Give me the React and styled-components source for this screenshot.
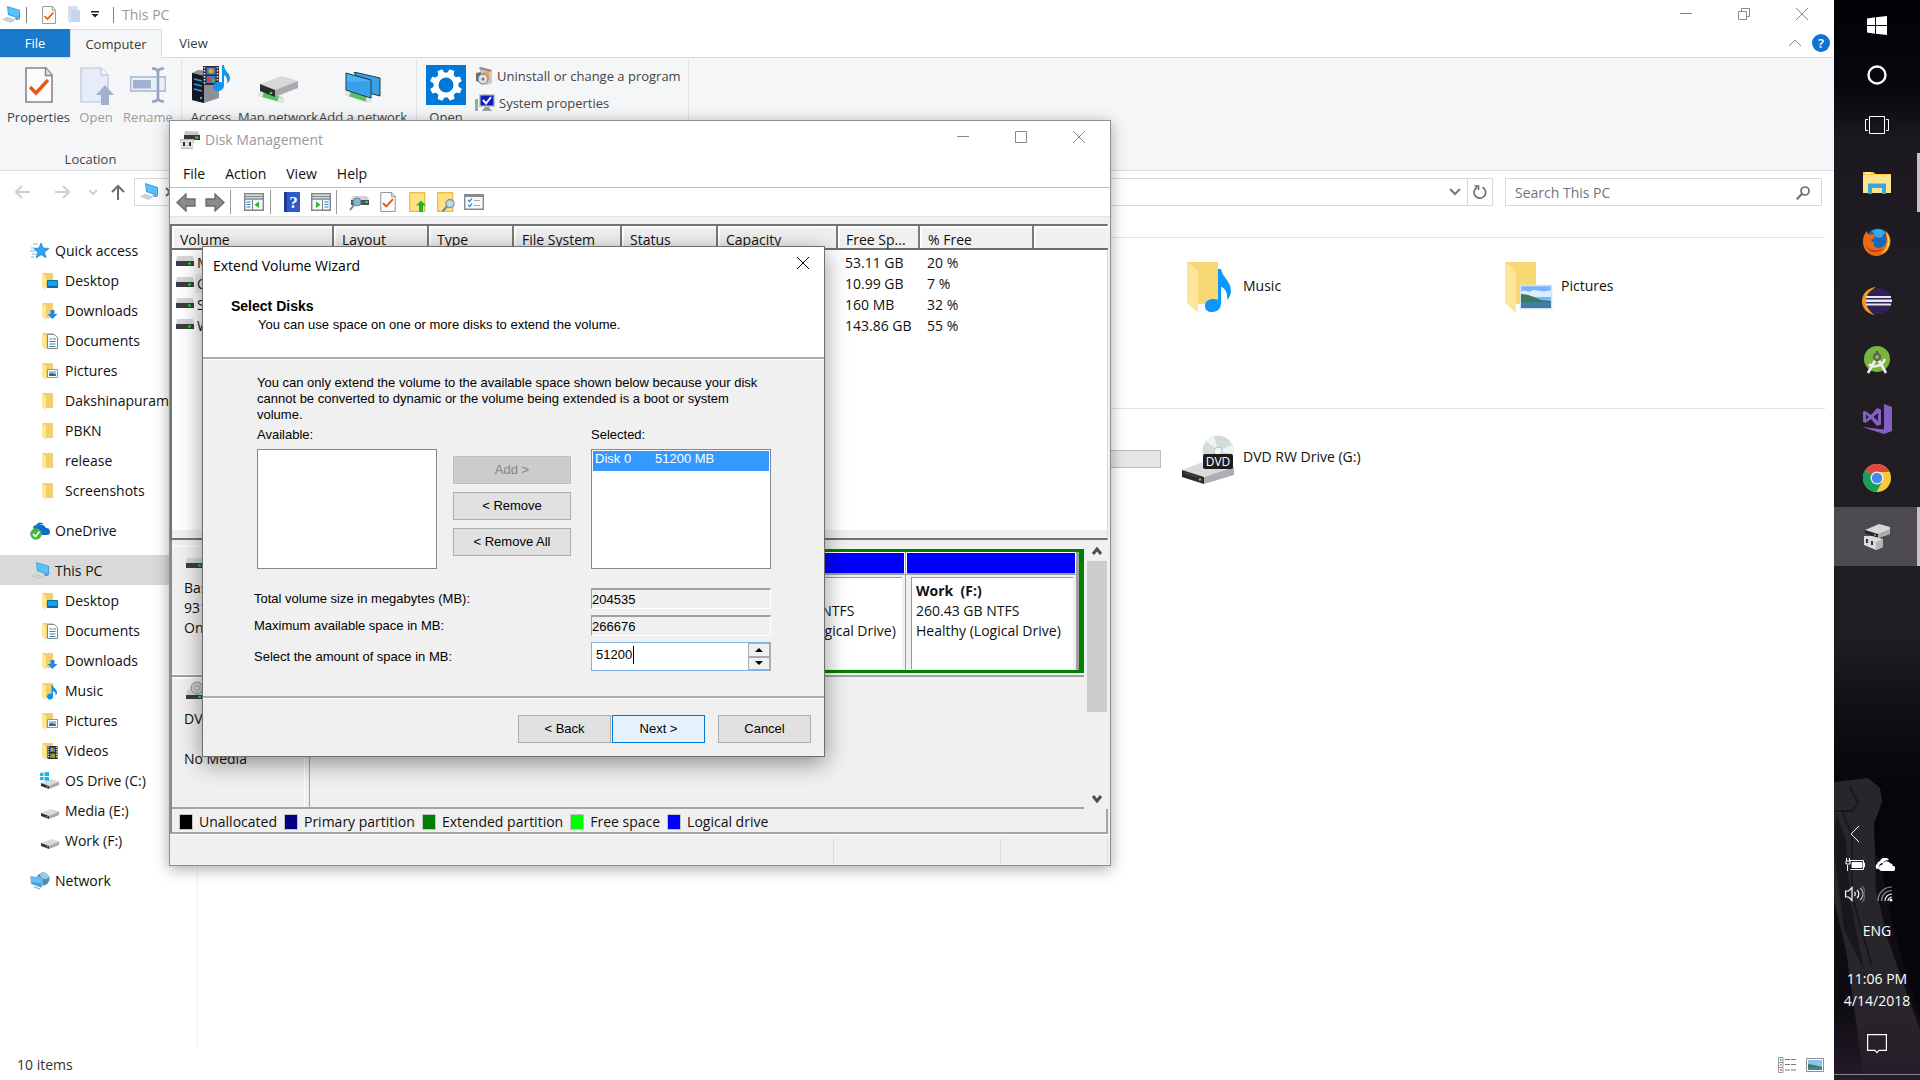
import { useState } from "react";
import styled, { createGlobalStyle, css } from "styled-components";

const ui = `"Open Sans", "Noto Sans", sans-serif`;
const dialog = `"Liberation Sans", Arial, sans-serif`;

/* ---------- icons ---------- */

const PcIcon = () => (
  <svg width="20" height="18" viewBox="0 0 20 18">
    <path d="M6 0 19 4v9L7 9z" fill="#3a9fe0" />
    <path d="M7 1.200 18 4.600v7L8 8.200z" fill="#5cc0fb" />
    <path d="M19 4v9l-3 1-3-2 6 1z" fill="#33668a" />
    <path d="M1 13 6 10.500l9 3-5 3.500z" fill="#d3dbe2" />
    <path d="m2 13.500 8 3M5 12l8 3" stroke="#a9b6c1" strokeWidth=".7" />
  </svg>
);

const DocCheckIcon = ({ w = 14, h = 18 }) => (
  <svg width={w} height={h} viewBox="0 0 28 36">
    <path d="M1 1h20l6 7v27H1z" fill="#fcfcfc" stroke="#858585" strokeWidth="1.600" />
    <path d="M20.500 1v7.500H27" fill="#e3e3e3" stroke="#858585" strokeWidth="1.400" />
    <path d="m5 20 6 6 12-13" fill="none" stroke="#f0520f" strokeWidth="3.400" />
  </svg>
);

const OpenIcon = () => (
  <svg width="36" height="38" viewBox="0 0 36 38">
    <path d="M3 1h20l7 7v27H3z" fill="#e6edf8" stroke="#b9c6de" strokeWidth="1.200" />
    <path d="M23 1v7h7" fill="#f5f8fd" stroke="#a9b8d3" />
    <path d="m27 18 9 10h-5v10h-8V28h-5z" fill="#a2b1ce" />
  </svg>
);

const RenameIcon = () => (
  <svg width="36" height="36" viewBox="0 0 36 36">
    <path d="M.7 10h34.600v14H.7z" fill="#eaf0f9" stroke="#a6b5d0" strokeWidth="1.300" />
    <path d="M3 13h18v8.500H3z" fill="#a2b1ce" />
    <path d="M22 1.500c4 0 6 1 6 4v25c0 3-2 4-6 4M34 1.500c-4 0-6 1-6 4v25c0 3 2 4 6 4" fill="none" stroke="#93a4c4" strokeWidth="2.600" />
  </svg>
);

const MediaIcon = () => (
  <svg width="40" height="38" viewBox="0 0 40 38">
    <path d="m1 8 6-3 21 1v27l-15 5-12-3z" fill="#8d9096" />
    <path d="m1 8 12 3v27L1 35z" fill="#15181d" />
    <path d="m3 14 8 2M3 19l8 2M3 24l8 2" stroke="#2b9ff2" strokeWidth="1.500" />
    <circle cx="10" cy="33" r="1.200" fill="#36b6ff" />
    <path d="M12 1h16v19H12z" fill="#2b2b2b" />
    <path d="M13.500 2v17M26.500 2v17" stroke="#e8e8e8" strokeWidth="1.600" strokeDasharray="1.500 1.500" />
    <path d="M15.500 2.500h9v7h-9zM15.500 11h9v7h-9z" fill="#3e7bd0" />
    <circle cx="20" cy="6" r="2.500" fill="#e7a51c" />
    <path d="M16 13h4v4h-4z" fill="#d8412b" />
    <path d="M21 14h3v3h-3z" fill="#5cad39" />
    <path d="M31 0h2c0 6 6 8 6 13 0 3-2 5-3 5 1-4-1-7-3-8v10c0 4-3 6-6 6s-5-2-5-4c0-3 3-5 6-5 1 0 2 0 3 .5z" fill="#1693ea" />
  </svg>
);

const NetDriveIcon = () => (
  <svg width="40" height="28" viewBox="0 0 40 28">
    <path d="m3 19 21 6" stroke="#57bf66" strokeWidth="5" />
    <path d="m0 18.500 5 1.500m15 4.500 6 1.500" stroke="#dfe6e0" strokeWidth="5" />
    <path d="M2 9 24 1l16 5-23 9z" fill="#d7d8da" />
    <path d="m17 15 23-9v7l-23 9z" fill="#a9abae" />
    <path d="m2 9 15 6v7L2 16z" fill="#2b2c2e" />
    <circle cx="13" cy="18" r="1.300" fill="#4be05c" />
  </svg>
);

const NetPlaceIcon = () => (
  <svg width="36" height="31" viewBox="0 0 36 31">
    <path d="m9 0 26 6v18L20 20z" fill="#3aa0e6" stroke="#24394b" />
    <path d="m2 21 22 7" stroke="#57bf66" strokeWidth="5" />
    <path d="m0 20.500 5 1.500m16 5 6 1.500" stroke="#dfe6e0" strokeWidth="5" />
    <path d="m1 1 25 7v18L1 18z" fill="#4db3f4" stroke="#20303f" />
    <path d="m2 10 23-1v16L2 17z" fill="#37a0ea" />
  </svg>
);

const GearIcon = () => (
  <svg width="40" height="40" viewBox="0 0 40 40">
    <path d="M0 0h40v40H0z" fill="#0078d7" />
    <circle cx="20" cy="20" r="10" fill="none" stroke="#fff" strokeWidth="5" />
    <g fill="#fff">
      {[22, 67, 112, 157, 202, 247, 292, 337].map((a) => (
        <path key={a} d="M16.500 9 17.500 4h5l1 5z" transform={`rotate(${a} 20 20)`} />
      ))}
    </g>
  </svg>
);

const UninstallIcon = () => (
  <svg width="18" height="20" viewBox="0 0 18 20">
    <path d="m5 1 12 3v13l-5 2-7-3z" fill="#c9c9c9" />
    <path d="m5 1 12 3-2 2L4 3z" fill="#8d8d8d" />
    <path d="M8 6h6v8H8z" fill="#f0a34a" />
    <path d="m1 7 5-1v11l-5-2z" fill="#6c7177" />
    <circle cx="8" cy="13" r="5" fill="#dde1e4" stroke="#757a80" />
    <circle cx="8" cy="13" r="1.500" fill="#777" />
  </svg>
);

const SystemIcon = () => (
  <svg width="20" height="18" viewBox="0 0 20 18">
    <path d="M0 5h3v12H0z" fill="#a7a7a7" />
    <circle cx="1.500" cy="8" r="1" fill="#35d43b" />
    <path d="M4 0h16v13H4z" fill="#c8c8c8" />
    <path d="M5.500 1.500h13v10h-13z" fill="#0a1fc0" />
    <path d="m8 6 3 3.500L16 3" fill="none" stroke="#fff" strokeWidth="2" />
    <path d="M10 13h4l3 4H7z" fill="#9c9c9c" />
  </svg>
);

const StarIcon = () => (
  <svg width="20" height="18" viewBox="0 0 20 18">
    <path d="m11 1 2.200 5 5.800.4-4.500 3.700 1.600 5.600L11 12.700 6 16l1.700-5.600L4 6.600 9 6z" fill="#2ea3ee" stroke="#1c7cc0" strokeWidth=".7" />
    <path d="M3 2h5M1 6h4M0 9h5M2 12h4M1 15h3" stroke="#67bdf1" />
  </svg>
);

const OneDriveIcon = () => (
  <svg width="20" height="18" viewBox="0 0 20 18">
    <path d="M5 10a4 4 0 0 1 3-6 5 5 0 0 1 8 2 4 4 0 0 1 4 4c0 2-1 3-3 3H7z" fill="#0a6fc9" />
    <path d="M3 5a4 4 0 0 1 3-2 5 5 0 0 1 8-1c-3 0-5 1-6 3-2 0-3 1-4 3z" fill="#1379d2" />
    <circle cx="6" cy="12" r="5.800" fill="#46b63c" />
    <path d="m3 12 2.500 2.500L9.500 9.500" fill="none" stroke="#fff" strokeWidth="1.700" />
  </svg>
);

const NetworkIcon = () => (
  <svg width="20" height="18" viewBox="0 0 20 18">
    <circle cx="13" cy="7" r="6.500" fill="#4a8fb5" />
    <path d="M9 3c3 1 3 4 6 4s3-2 4-2c0-3-4-5-7-5z" fill="#9bcde2" />
    <path d="m0 4 12 2v10L1 12z" fill="#3d9fe2" stroke="#d0e5f3" strokeWidth=".6" />
    <path d="m1 5 10 2v4L1 10z" fill="#66c1f8" />
    <path d="m4 15 6 2" stroke="#8aa" strokeWidth="1.300" />
  </svg>
);

const NoteShape = () => (
  <path d="M9.500 3h1.200c.3 3 4.800 4.500 4.300 8-.3 1.500-1 2-1.500 2.500.6-2-1-4-2.500-4.500V15a3 3 0 1 1-1.500-3z" fill="#0c91e8" />
);

const overlays = {
  desktop: (
    <g>
      <path d="M5.500 8.500h10v7h-10z" fill="#17a0f2" stroke="#0871b4" />
      <path d="M6 14.500h9" stroke="#0b5f9b" />
    </g>
  ),
  downloads: <path d="M8.500 8h4v4h3L10.500 17l-5-5h3z" fill="#2f86d6" />,
  documents: (
    <g>
      <path d="M5.500 2.500h7l3 3v11h-10z" fill="#fff" stroke="#868686" />
      <path d="M7.500 7h2.500M11 7h3M7.500 9.500h6M7.500 12h6M7.500 14.500h6" stroke="#2e84bb" />
    </g>
  ),
  pictures: (
    <g>
      <path d="M5.500 7.500h10v8h-10z" fill="#fff" stroke="#959595" />
      <path d="M7 9h7v3H7z" fill="#8fc4ef" />
      <path d="m7 12 3-1 4 1.500V14H7z" fill="#2c6f72" />
    </g>
  ),
  music: <NoteShape />,
  videos: (
    <g>
      <path d="M5.500 4h10v13h-10z" fill="#2b2b2b" />
      <path d="M6.600 4.500v12M14.400 4.500v12" stroke="#e8e8e8" strokeWidth="1.100" strokeDasharray="1.200 1.200" />
      <path d="M8 5.500h5v4.500H8z" fill="#3f77cf" />
      <path d="M8 11.500h5V16H8z" fill="#6a8f3a" />
      <path d="M9 6h2v3H9zM10.500 12h2v3h-2z" fill="#e59b28" />
    </g>
  ),
};

const FolderIcon = ({ kind }) => (
  <svg width="17" height="18" viewBox="0 0 17 18">
    <path d="M0 1h11v14l1 1H4z" fill="#f2cf68" />
    <path d="m0 1 4 3v14l-4-3z" fill="#fde79b" />
    {overlays[kind]}
  </svg>
);

const BigFolderIcon = ({ kind }) => (
  <svg width="54" height="52" viewBox="0 0 54 52">
    <path d="M5 0h31v42H16z" fill="#f6d877" />
    <path d="m5 0 11 9v42L5 41z" fill="#fde699" />
    {kind === "music" ? (
      <path d="M36 7h3c1 8 10 12 10 22 0 4-2 7-4 9 1-7-2-12-6-13v16c0 6-4 9-9 9-4 0-7-2-7-6 0-5 4-7 8-7 2 0 4 0 5 1z" fill="#0b98f8" />
    ) : (
      <g>
        <path d="M20.500 23.500h31v23h-31z" fill="#79b4fb" stroke="#d8e2ec" strokeWidth="1.500" />
        <path d="M21 30c4-3 7 1 10-1 5-3 9 3 20-1v7H21z" fill="#dcedff" />
        <path d="M21 32c6 0 14 3 20 6l10 1v2H21z" fill="#3f7a57" />
        <path d="M21 40h30v6H21z" fill="#3f7fa6" />
      </g>
    )}
  </svg>
);

const DriveIcon = ({ system }) => (
  <svg width="20" height="18" viewBox="0 0 20 18">
    <path d="m1 11 10-4 8 2.500-10 4.500z" fill="#d9dadc" />
    <path d="m9 14 10-4.500V13l-10 4z" fill="#a7a8ab" />
    <path d="m1 11 8 3v3l-8-3z" fill="#303133" />
    <circle cx="7" cy="14.700" r=".8" fill="#44dd55" />
    {system && (
      <g fill="#1eb4ea">
        <path d="m0 1 3.500-.5V4H0zM4.500.3 9 0v4H4.500zM0 5h3.500v3.500L0 8zM4.500 5H9v4l-4.500-.4z" />
      </g>
    )}
  </svg>
);

const DvdDriveIcon = () => (
  <svg width="54" height="52" viewBox="0 0 54 52">
    <circle cx="36" cy="18" r="15.500" fill="#d3dcdb" />
    <path d="M36 18 24 8a15.500 15.500 0 0 1 8-5zM36 18l14-6a15.500 15.500 0 0 1 1 9z" fill="#eef4f2" />
    <circle cx="36" cy="18" r="4" fill="#f3f6f5" stroke="#b9c3c2" />
    <path d="m0 37 26-10 26 7-30 10z" fill="#d9dadd" />
    <path d="m22 44 30-10v8L22 51z" fill="#adaeb2" />
    <path d="m0 37 22 7v7L0 44z" fill="#2a2a2c" />
    <path d="m3 40 13 4" stroke="#555" />
    <circle cx="18" cy="46.500" r="1.300" fill="#41dd4a" />
    <rect x="21" y="21" width="30" height="15" rx="2" fill="#1d1d1f" />
    <text x="36" y="33" textAnchor="middle" fontFamily="Open Sans" fontSize="12" fill="#fff">DVD</text>
  </svg>
);

const MgmtIcon = ({ size = 20 }) => (
  <svg width={size} height={size} viewBox="0 0 20 20">
    <path d="m5 1 13 .5L20 6v4H4V6z" fill="#c5c7c9" />
    <path d="M4 5h16v5H4z" fill="#37393b" />
    <path d="M15 6.500h3.500v2H15z" fill="#2fcf3f" />
    <path d="M0 9h14v4h-1v6H1v-6H0z" fill="#b8babd" />
    <path d="M1 10h12v8H1z" fill="#dedfe0" />
    <path d="M3 12h2v4H3zM9 12h2v4H9z" fill="#333" />
  </svg>
);

const VolumeIcon = () => (
  <svg width="18" height="12" viewBox="0 0 18 12">
    <path d="M1 0h16l1 5H0z" fill="#d4d7da" />
    <path d="M0 5h18v5H0z" fill="#3b3d3f" />
    <path d="M12 6.500h3v2h-3z" fill="#2bd03c" />
  </svg>
);

const CdIcon = () => (
  <svg width="20" height="20" viewBox="0 0 20 20">
    <path d="M2 8h16l2 6H0z" fill="#d4d7da" />
    <circle cx="11" cy="7" r="6" fill="#c9cccf" stroke="#8f9396" />
    <circle cx="11" cy="7" r="2" fill="#f2f2f2" stroke="#999" />
    <path d="M0 14h20v4H0z" fill="#3b3d3f" />
    <path d="M12 15h3v2h-3z" fill="#2bd03c" />
  </svg>
);

const BigArrow = ({ flip }) => (
  <svg width="20" height="19" viewBox="0 0 20 19">
    <path d="M1 9.500 10 1v5h9v7h-9v5z" fill="#8b8b8b" stroke="#6a6a6a" strokeWidth="1.300" transform={flip ? "matrix(-1 0 0 1 20 0)" : undefined} />
  </svg>
);

const PaneIcon = ({ right }) => (
  <svg width="20" height="18" viewBox="0 0 20 18">
    <path d="M.7.700h18.600v16.600H.7z" fill="#f7f7f7" stroke="#80868d" strokeWidth="1.400" />
    <path d="M1 3.500h18M1 6h18" stroke="#80868d" strokeWidth="1.500" />
    <g transform={right ? "matrix(-1 0 0 1 20 0)" : undefined}>
      <path d="M2.500 9h4M2.500 11.500h4M2.500 14h4" stroke="#3b82c4" />
      <path d="M8.500 6.500V17" stroke="#80868d" />
      <path d="m15 8.500-4.500 3.300L15 15z" fill="#30b52c" />
    </g>
  </svg>
);

const HelpBookIcon = () => (
  <svg width="16" height="20" viewBox="0 0 16 20">
    <path d="M0 0h16v20H0z" fill="#3159c8" />
    <path d="M0 0h3v20H0z" fill="#1d3c99" />
    <text x="9.500" y="15.500" textAnchor="middle" fontFamily="Liberation Serif" fontWeight="700" fontSize="17" fill="#fff">?</text>
  </svg>
);

const RescanIcon = () => (
  <svg width="20" height="18" viewBox="0 0 20 18">
    <path d="m4 3 14 0 2 4H2z" fill="#cfd2d4" />
    <path d="M2 7h18v5H2z" fill="#4d5255" />
    <path d="M16 8h3v2h-3z" fill="#2bd03c" />
    <circle cx="8" cy="9" r="4" fill="#86b3cf" stroke="#6c8798" />
    <path d="m5 12-4 5" stroke="#76808a" strokeWidth="2" />
  </svg>
);

const FolderUpIcon = () => (
  <svg width="17" height="20" viewBox="0 0 17 20">
    <path d="M.7.700h15v18.600H.7z" fill="#fde184" stroke="#e7bd3c" strokeWidth="1.200" />
    <path d="m12 8.500 5 5h-3V20h-4v-6.500H7z" fill="#1fb91f" />
  </svg>
);

const FolderFindIcon = () => (
  <svg width="18" height="20" viewBox="0 0 18 20">
    <path d="M.7.700h15v18.600H.7z" fill="#fde184" stroke="#e7bd3c" strokeWidth="1.200" />
    <circle cx="13" cy="11.500" r="4" fill="#bcdcec" stroke="#7c93a2" strokeWidth="1.300" />
    <path d="m10 14.500-4.500 5" stroke="#7d858c" strokeWidth="2" />
  </svg>
);

const ChecklistIcon = () => (
  <svg width="20" height="16" viewBox="0 0 20 16">
    <path d="M.7.700h18.600v14.600H.7z" fill="#fafafa" stroke="#858a90" strokeWidth="1.400" />
    <path d="M1 2h18" stroke="#858a90" strokeWidth="2" />
    <path d="m4 6 1.500 1.500L8 4.500M4 11l1.500 1.500L8 9.500" fill="none" stroke="#3b8fdc" strokeWidth="1.300" />
    <path d="M10 6.500h6M10 11.500h6" stroke="#a9a9a9" />
  </svg>
);

const Line = ({ d, w = 18, h = 18, color = "#8a8a8a", sw = 1 }) => (
  <svg width={w} height={h} viewBox={`0 0 ${w} ${h}`}>
    <path d={d} fill="none" stroke={color} strokeWidth={sw} />
  </svg>
);

const MIN = "M0 5.500h12";
const MAX = "M.5.500h11v11H.5z";
const CLOSE = "M0 0l12 12M12 0 0 12";
const RESTORE = "M.5 3.500h8v8h-8zM3.500 3V.500h8v8H9";

/* ---------- data ---------- */

const tree = [
  {
    label: "Quick access",
    icon: <StarIcon />,
    items: [
      ["Desktop", <FolderIcon kind="desktop" />],
      ["Downloads", <FolderIcon kind="downloads" />],
      ["Documents", <FolderIcon kind="documents" />],
      ["Pictures", <FolderIcon kind="pictures" />],
      ["Dakshinapuram", <FolderIcon />],
      ["PBKN", <FolderIcon />],
      ["release", <FolderIcon />],
      ["Screenshots", <FolderIcon />],
    ],
  },
  { label: "OneDrive", icon: <OneDriveIcon />, items: [] },
  {
    label: "This PC",
    icon: <PcIcon />,
    active: true,
    items: [
      ["Desktop", <FolderIcon kind="desktop" />],
      ["Documents", <FolderIcon kind="documents" />],
      ["Downloads", <FolderIcon kind="downloads" />],
      ["Music", <FolderIcon kind="music" />],
      ["Pictures", <FolderIcon kind="pictures" />],
      ["Videos", <FolderIcon kind="videos" />],
      ["OS Drive (C:)", <DriveIcon system />],
      ["Media (E:)", <DriveIcon />],
      ["Work (F:)", <DriveIcon />],
    ],
  },
  { label: "Network", icon: <NetworkIcon />, items: [] },
];

const columns = [
  ["Volume", 161],
  ["Layout", 95],
  ["Type", 85],
  ["File System", 108],
  ["Status", 96],
  ["Capacity", 120],
  ["Free Sp...", 82],
  ["% Free", 114],
  ["", 75],
];

const volumes = [
  ["Media (E:)", "53.11 GB", "20 %"],
  ["OS Drive (C:)", "10.99 GB", "7 %"],
  ["System", "160 MB", "32 %"],
  ["Work (F:)", "143.86 GB", "55 %"],
];

const legend = [
  ["Unallocated", "#000000"],
  ["Primary partition", "#000080"],
  ["Extended partition", "#008000"],
  ["Free space", "#00ff00"],
  ["Logical drive", "#0000ff"],
];

/* ---------- explorer ---------- */

const Explorer = () => (
  <ExplorerView>
    <TitleBar>
      <QuickBar>
        <PcIcon />
        <Divider />
        <IconButton $w={34} aria-label="Properties"><DocCheckIcon /></IconButton>
        <IconButton $w={16} aria-label="New folder">
          <svg width="12" height="18" viewBox="0 0 12 18">
            <path d="M0 0h10v4l2 1v11H3v2l-3-3z" fill="#d5e0f0" />
            <path d="M3 4h9v12H3z" fill="#c6d5ea" />
          </svg>
        </IconButton>
        <IconButton $w={26} aria-label="Customize">
          <svg width="8" height="7" viewBox="0 0 8 7">
            <path d="M0 0h8v1.400H0zM.5 3h7L4 6.500z" fill="#222" />
          </svg>
        </IconButton>
        <Divider />
        <span>This PC</span>
      </QuickBar>
      <WindowButtons>
        <button aria-label="Minimize"><Line d={MIN} w={12} h={12} /></button>
        <button aria-label="Restore"><Line d={RESTORE} w={12} h={12} /></button>
        <button aria-label="Close"><Line d={CLOSE} w={12} h={12} /></button>
      </WindowButtons>
    </TitleBar>

    <Tabs>
      <FileTab>File</FileTab>
      <Tab $active>Computer</Tab>
      <Tab>View</Tab>
      <TabTools>
        <IconButton $w={20} aria-label="Collapse ribbon"><Line d="M0 7l6-6 6 6" w={12} h={8} /></IconButton>
        <HelpButton aria-label="Help">?</HelpButton>
      </TabTools>
    </Tabs>

    <Ribbon>
      <RibbonGroup $w={181}>
        <RibbonButtons>
          <RibbonButton $w={77}><DocCheckIcon w={28} h={36} />Properties</RibbonButton>
          <RibbonButton $w={38} $tight disabled><OpenIcon />Open</RibbonButton>
          <RibbonButton $w={66} disabled><RenameIcon />Rename</RibbonButton>
        </RibbonButtons>
        <GroupName>Location</GroupName>
      </RibbonGroup>
      <RibbonGroup $w={234}>
        <RibbonButtons>
          <RibbonButton $w={58}><MediaIcon />Access</RibbonButton>
          <RibbonButton $w={76}><NetDriveIcon />Map network</RibbonButton>
          <RibbonButton $w={94}><NetPlaceIcon />Add a network</RibbonButton>
        </RibbonButtons>
      </RibbonGroup>
      <RibbonGroup $w={271}>
        <RibbonButtons>
          <RibbonButton $w={58} $tight><GearIcon />Open</RibbonButton>
          <SmallButtons>
            <button><UninstallIcon />Uninstall or change a program</button>
            <button><SystemIcon />System properties</button>
          </SmallButtons>
        </RibbonButtons>
      </RibbonGroup>
    </Ribbon>

    <AddressRow>
      <NavButtons>
        <IconButton $w={40} aria-label="Back"><Line d="M15 8H1M7 2 1 8l6 6" w={16} h={16} color="#cfcfcf" sw={2} /></IconButton>
        <IconButton $w={40} aria-label="Forward"><Line d="M0 8h14M8 2l6 6-6 6" w={16} h={16} color="#cfcfcf" sw={2} /></IconButton>
        <IconButton $w={20} aria-label="Recent"><Line d="M0 1l4 4 4-4" w={8} h={6} color="#cfcfcf" sw={2} /></IconButton>
        <IconButton $w={30} aria-label="Up"><Line d="M7 16V2M1 8l6-6 6 6" w={14} h={16} color="#6b6b6b" sw={2} /></IconButton>
      </NavButtons>
      <AddressBox>
        <Crumb>
          <PcIcon />
          <Line d="M1 1l4 4-4 4" w={6} h={10} color="#6b6b6b" sw={2} />
        </Crumb>
        <IconButton $w={24} aria-label="Previous locations"><Line d="M1 1l5 5 5-5" w={12} h={8} color="#777" sw={2} /></IconButton>
        <RefreshButton aria-label="Refresh">
          <svg width="14" height="16" viewBox="0 0 14 16" fill="none" stroke="#707070" strokeWidth="1.700">
            <path d="M9.500 3.200A5.800 5.800 0 1 1 4 3.300M1.500 2h4v4" />
          </svg>
        </RefreshButton>
      </AddressBox>
      <SearchBox>
        <input aria-label="Search This PC" placeholder="Search This PC" />
        <svg width="14" height="14" viewBox="0 0 14 14" fill="none" stroke="#6b6b6b">
          <circle cx="9" cy="5" r="4" strokeWidth="1.700" />
          <path d="M6 8 .7 13.300" strokeWidth="2" />
        </svg>
      </SearchBox>
    </AddressRow>

    <ExplorerBody>
      <NavPane>
        {tree.map((group) => (
          <ul key={group.label}>
            <li><NavLink href="#" $active={group.active}><i>{group.icon}</i>{group.label}</NavLink></li>
            {group.items.map(([label, icon]) => (
              <li key={label}><NavLink href="#" $child><i>{icon}</i>{label}</NavLink></li>
            ))}
          </ul>
        ))}
      </NavPane>
      <Content>
        <Tiles>
          <Tile href="#" $col={4}><BigFolderIcon kind="music" /><span>Music</span></Tile>
          <Tile href="#" $col={5}><BigFolderIcon kind="pictures" /><span>Pictures</span></Tile>
        </Tiles>
        <Tiles>
          <Tile href="#" $col={3} aria-label="Work (F:)"><DriveSlot /><UsageBar /></Tile>
          <Tile href="#" $col={4}><DvdDriveIcon /><span>DVD RW Drive (G:)</span></Tile>
        </Tiles>
      </Content>
    </ExplorerBody>

    <StatusBar>
      <span>10 items</span>
      <ViewButtons>
        <button aria-label="Details">
          <svg width="18" height="16" viewBox="0 0 18 16">
            <path d="M.5.500h4.500v15H.5zM.5 5.500H5M.5 10.500H5" fill="#fff" stroke="#999" />
            <path d="M2 2.200h1.600v1.600H2z" fill="#2b82b8" />
            <path d="M2 7.200h1.600v1.600H2z" fill="#b86d2b" />
            <path d="M2 12.200h1.600v1.600H2z" fill="#d22" />
            <path d="M7 2.500h5m1 0h5M7 7.500h5m1 0h5M7 13h5m1 0h5" stroke="#777" />
          </svg>
        </button>
        <button aria-label="Large icons">
          <svg width="18" height="14" viewBox="0 0 18 14">
            <path d="M.5.500h17v13H.5z" fill="#fff" stroke="#8f8f8f" />
            <path d="M2 2h14v10H2z" fill="#8cc0f5" />
            <path d="m2 6 6 1 8 2v1H2z" fill="#3d7a5d" />
            <path d="M2 9.500h14V12H2z" fill="#467fa8" />
          </svg>
        </button>
      </ViewButtons>
    </StatusBar>
  </ExplorerView>
);

/* ---------- disk management ---------- */

const DiskManagement = () => (
  <DiskWindow>
    <DiskTitle>
      <MgmtIcon />
      <span>Disk Management</span>
      <WindowButtons>
        <button aria-label="Minimize"><Line d={MIN} w={12} h={12} /></button>
        <button aria-label="Maximize"><Line d={MAX} w={12} h={12} /></button>
        <button aria-label="Close"><Line d={CLOSE} w={12} h={12} /></button>
      </WindowButtons>
    </DiskTitle>
    <MenuBar>
      <button>File</button>
      <button>Action</button>
      <button>View</button>
      <button>Help</button>
    </MenuBar>
    <Toolbar>
      <IconButton $w={28} aria-label="Back"><BigArrow /></IconButton>
      <IconButton $w={30} aria-label="Forward"><BigArrow flip /></IconButton>
      <ToolDivider />
      <IconButton $w={32} aria-label="Console tree"><PaneIcon /></IconButton>
      <ToolDivider />
      <IconButton $w={28} aria-label="Help"><HelpBookIcon /></IconButton>
      <IconButton $w={30} aria-label="Action pane"><PaneIcon right /></IconButton>
      <ToolDivider />
      <IconButton $w={30} aria-label="Rescan"><RescanIcon /></IconButton>
      <IconButton $w={28} aria-label="Properties"><DocCheckIcon w={16} h={20} /></IconButton>
      <IconButton $w={30} aria-label="Up"><FolderUpIcon /></IconButton>
      <IconButton $w={28} aria-label="Find"><FolderFindIcon /></IconButton>
      <IconButton $w={28} aria-label="Settings"><ChecklistIcon /></IconButton>
    </Toolbar>

    <Panes>
      <VolumePane>
        <VolumeTable>
          <colgroup>
            {columns.map(([name, width]) => <col key={name} style={{ width }} />)}
          </colgroup>
          <thead>
            <tr>{columns.map(([name]) => <th key={name}>{name}</th>)}</tr>
          </thead>
          <tbody>
            {volumes.map(([name, free, percent], i) => (
              <tr key={name}>
                <VolumeName $selected={i === 1}><VolumeIcon /><span>{name}</span></VolumeName>
                <td /><td /><td /><td /><td />
                <td>{free}</td>
                <td>{percent}</td>
                <td />
              </tr>
            ))}
          </tbody>
        </VolumeTable>
      </VolumePane>
      <GraphPane>
        <Disks>
          <DiskRow>
            <DiskLabel>
              <VolumeIcon />
              <p>Basic</p>
              <p>931.39 GB</p>
              <p>Online</p>
            </DiskLabel>
            <PartitionStrip>
              <Extended>
                <Partition $w={165}>
                  <div>
                    <b>Media&nbsp; (E:)</b>
                    <p>265.53 GB NTFS</p>
                    <p>Healthy (Logical Drive)</p>
                  </div>
                </Partition>
                <Partition $w={173}>
                  <div>
                    <b>Work&nbsp; (F:)</b>
                    <p>260.43 GB NTFS</p>
                    <p>Healthy (Logical Drive)</p>
                  </div>
                </Partition>
              </Extended>
            </PartitionStrip>
          </DiskRow>
          <DiskRow>
            <DiskLabel>
              <CdIcon />
              <p>DVD (G:)</p>
              <p>&nbsp;</p>
              <p>No Media</p>
            </DiskLabel>
          </DiskRow>
        </Disks>
        <ScrollBar>
          <button aria-label="Scroll up"><Line d="M1 7l4-5 4 5" w={10} h={8} color="#505050" sw={3} /></button>
          <ScrollThumb />
          <Spacer />
          <button aria-label="Scroll down"><Line d="M1 1l4 5 4-5" w={10} h={8} color="#505050" sw={3} /></button>
        </ScrollBar>
      </GraphPane>
      <Legend>
        {legend.map(([name, color]) => (
          <li key={name}><Swatch $color={color} />{name}</li>
        ))}
      </Legend>
    </Panes>
    <DiskStatus><span /><span /><span /></DiskStatus>
  </DiskWindow>
);

/* ---------- wizard ---------- */

const ExtendWizard = () => {
  const [amount, setAmount] = useState("51200");

  return (
    <WizardView>
      <WizardHeader>
        <WizardTitle>
          Extend Volume Wizard
          <button aria-label="Close"><Line d={CLOSE} w={12} h={12} color="#000" /></button>
        </WizardTitle>
        <h2>Select Disks</h2>
        <p>You can use space on one or more disks to extend the volume.</p>
      </WizardHeader>

      <WizardBody>
        <p>
          You can only extend the volume to the available space shown below because your disk
          cannot be converted to dynamic or the volume being extended is a boot or system volume.
        </p>
        <DiskPicker>
          <div>
            <span id="available">Available:</span>
            <ListBox role="listbox" aria-labelledby="available" />
          </div>
          <PickerButtons>
            <DialogButton disabled>Add &gt;</DialogButton>
            <DialogButton>&lt; Remove</DialogButton>
            <DialogButton>&lt; Remove All</DialogButton>
          </PickerButtons>
          <div>
            <span id="selected">Selected:</span>
            <ListBox role="listbox" aria-labelledby="selected">
              <li role="option" aria-selected="true"><span>Disk 0</span><span>51200 MB</span></li>
            </ListBox>
          </div>
        </DiskPicker>
        <Sizes>
          <label htmlFor="total">Total volume size in megabytes (MB):</label>
          <ReadOnlyField id="total" readOnly value="204535" />
          <label htmlFor="maximum">Maximum available space in MB:</label>
          <ReadOnlyField id="maximum" readOnly value="266676" />
          <label htmlFor="amount">Select the amount of space in MB:</label>
          <Spinner>
            <input id="amount" value={amount} onChange={(e) => setAmount(e.target.value)} />
            <Caret />
            <SpinButtons>
              <button aria-label="Increase" onClick={() => setAmount(String(+amount + 1))}>
                <svg width="8" height="4" viewBox="0 0 8 4"><path d="M0 4 4 0l4 4z" /></svg>
              </button>
              <button aria-label="Decrease" onClick={() => setAmount(String(+amount - 1))}>
                <svg width="8" height="4" viewBox="0 0 8 4"><path d="m0 0 4 4 4-4z" /></svg>
              </button>
            </SpinButtons>
          </Spinner>
        </Sizes>
      </WizardBody>

      <WizardFooter>
        <StepButtons>
          <DialogButton>&lt; Back</DialogButton>
          <DialogButton $primary>Next &gt;</DialogButton>
        </StepButtons>
        <DialogButton>Cancel</DialogButton>
      </WizardFooter>
    </WizardView>
  );
};

/* ---------- taskbar ---------- */

const Taskbar = () => (
  <TaskbarView>
    <Wallpaper viewBox="0 0 86 1080" preserveAspectRatio="none" aria-hidden="true">
      <defs>
        <linearGradient id="night" x2="0" y2="1">
          <stop offset="0" stopColor="#010106" />
          <stop offset=".08" stopColor="#07070d" />
          <stop offset=".13" stopColor="#1b1820" />
          <stop offset=".3" stopColor="#211e23" />
          <stop offset=".6" stopColor="#1f1c22" />
          <stop offset=".74" stopColor="#141218" />
          <stop offset="1" stopColor="#0a070e" />
        </linearGradient>
        <linearGradient id="sky" gradientUnits="userSpaceOnUse" x1="0" y1="640" x2="0" y2="800">
          <stop offset="0" stopColor="#05050b" stopOpacity="0" />
          <stop offset="1" stopColor="#05050b" />
        </linearGradient>
        <linearGradient id="plum" x2="0" y2="1">
          <stop offset="0" stopColor="#241c28" stopOpacity="0" />
          <stop offset="1" stopColor="#271c29" />
        </linearGradient>
      </defs>
      <path d="M0 0h86v1080H0z" fill="url(#night)" />
      <path d="M0 640h86v380L60 930 46 860 0 800z" fill="url(#sky)" />
      <path d="M0 782 34 778l12 10 2 14-8 22 2 66 12 50 32 90v50H30L12 950 0 900z" fill="#28262a" />
      <path d="M2 812 12 840l4 60 14 70-20-40L0 850z" fill="#19171c" />
      <path d="M0 811h18l6-8-8-16M8 811l10 25v60l20 70" fill="none" stroke="#1a181c" strokeWidth="2" />
      <path d="M0 1000h86v80H0z" fill="url(#plum)" />
      <path d="M0 1074.500h86" stroke="#8a858c" />
    </Wallpaper>
    <SystemButton aria-label="Start">
      <svg width="20" height="19" viewBox="0 0 20 19" fill="#fff">
        <path d="m0 2.500 8-1.200V9H0zM9 1.200 20 0v9H9zM0 10h8v7.700L0 16.500zM9 10h11v9L9 17.800z" />
      </svg>
    </SystemButton>
    <SystemButton aria-label="Cortana">
      <svg width="20" height="20" viewBox="0 0 20 20"><circle cx="10" cy="10" r="8.500" fill="none" stroke="#fff" strokeWidth="2.400" /></svg>
    </SystemButton>
    <SystemButton aria-label="Task view">
      <svg width="24" height="18" viewBox="0 0 24 18" fill="none" stroke="#fff">
        <path d="M4.500.500h15v17h-15zM3 3.500H.5v11H3M21 3.500h2.500v11H21" />
      </svg>
    </SystemButton>
    <Apps>
      <AppButton $open aria-label="File Explorer">
        <svg width="28" height="24" viewBox="0 0 28 24">
          <path d="M0 1h10l3 2h15v19H0z" fill="#f8c644" />
          <path d="M0 4h28v18H0z" fill="#ffe48f" />
          <path d="M2 1.500h6v1.300H2z" fill="#fff" />
          <path d="M5 12.500h18V23h-4v-6H9v6H5z" fill="#35a9e0" />
        </svg>
      </AppButton>
      <AppButton aria-label="Firefox">
        <svg width="28" height="28" viewBox="0 0 28 28">
          <circle cx="15" cy="13" r="12.500" fill="#1569b5" />
          <path d="M9 3c5-3 12-2 14 3-3-1-4 1-3 3l-6 1z" fill="#35a9e5" />
          <path d="M23 3c8 7 5 24-9 25C6 28 0 22 0 14 0 8 2 5 4 3c0 2 1 3 2 4 2-1 4-1 6 0 1 1 0 2-1 3l-3 2c0 1 1 2 3 2-1 3 0 6 4 6 6 0 10-5 8-12z" fill="#ea6a1b" />
          <path d="M23 4c6 6 5 18-5 22 7-6 8-14 5-22z" fill="#fcd93c" />
          <path d="M3 17c3 6 11 7 17 3-2 5-14 7-17-3z" fill="#c9331a" />
        </svg>
      </AppButton>
      <AppButton aria-label="Eclipse">
        <svg width="30" height="28" viewBox="0 0 30 28">
          <path d="M14 0C-4 2-5 25 13 28 2 22 3 6 14 0z" fill="#f7941e" />
          <circle cx="17" cy="14" r="13" fill="#2c2255" />
          <path d="M4 12.500h26v2.500H4zM4 9h25v2H4zM4 16.500h25v2H4z" fill="#e7e5ee" />
        </svg>
      </AppButton>
      <AppButton aria-label="Android Studio">
        <svg width="26" height="28" viewBox="0 0 26 28">
          <circle cx="13" cy="13" r="13" fill="#79b43c" />
          <path d="M13 11 4 27M13 11l9 16" stroke="#ededed" strokeWidth="2.600" />
          <path d="M5 18c3 4 13 3 16-5" fill="none" stroke="#ededed" strokeWidth="2.600" />
          <circle cx="13" cy="11" r="3" fill="#9bc46a" stroke="#5b6457" strokeWidth="2.400" />
          <path d="M11.500 5h3v3h-3z" fill="#5b6457" />
        </svg>
      </AppButton>
      <AppButton aria-label="Visual Studio">
        <svg width="30" height="30" viewBox="0 0 30 30" fill="#865fc5">
          <path d="m22 0 8 3v24l-8 3L0 23l22 2.500z" />
          <path d="M1 7.500 3.500 7 9 11l6-7 4 1.500v15L15 22l-6-7-5.500 4L1 18zm3 2.500v6l2.500-3zm7.500 3 4.500 4V9z" fillRule="evenodd" />
        </svg>
      </AppButton>
      <AppButton aria-label="Chrome">
        <svg width="28" height="28" viewBox="0 0 28 28">
          <circle cx="14" cy="14" r="14" fill="#fbc73d" />
          <path d="M14 14 2 6.500A14 14 0 0 1 26.500 8H14z" fill="#dd4a3e" />
          <path d="M14 14 2 6.500A14 14 0 0 0 13.500 28L19 18z" fill="#1b9e5a" />
          <path d="M14 7.500h12.300" stroke="#dd4a3e" />
          <circle cx="14" cy="14" r="6.500" fill="#f2f5f2" />
          <circle cx="14" cy="14" r="5.200" fill="#4687f0" />
        </svg>
      </AppButton>
      <AppButton $open $active aria-label="Disk Management">
        <svg width="28" height="26" viewBox="0 0 28 26">
          <path d="M2 6 16 0l11 3v7l-12 4L2 10z" fill="#d6d6d6" />
          <path d="m2 6 13 4v4L2 10z" fill="#252728" />
          <path d="m15 10 12-5v5l-12 4z" fill="#aaaaac" />
          <path d="M1 12h8l11 3v8l-7 3-12-5z" fill="#dadada" />
          <path d="m13 18 7-3v8l-7 3z" fill="#b4b4b6" />
          <path d="M3 15h2v4H3zM8 17h2v4H8z" fill="#333" />
          <circle cx="12" cy="11" r="1" fill="#32d143" />
        </svg>
      </AppButton>
    </Apps>
    <Spacer />
    <Tray>
      <button aria-label="Show hidden icons"><Line d="M9 0 1 8l8 8" w={10} h={16} color="#fff" sw={1} /></button>
      <span />
      <button aria-label="Battery">
        <svg width="20" height="13" viewBox="0 0 20 13" fill="none" stroke="#fff">
          <path d="M5 2.500h13.500v9H5.500M18.500 5h1v4h-1M2.500 7v6M1 3h4v3H1zM1.500 0v3M4.500 0v3" />
          <path d="M7 4.500h10v5H7z" fill="#fff" />
        </svg>
      </button>
      <button aria-label="OneDrive">
        <svg width="20" height="13" viewBox="0 0 20 13" fill="#fff">
          <path d="M4 11H2a3 3 0 0 1 0-5 4 4 0 0 1 3-3 5 5 0 0 1 9-1c-3 0-5 1-6 3-3 0-5 3-4 6z" />
          <path d="M7 13a3 3 0 0 1 0-6 4.500 4.500 0 0 1 8-2 3.500 3.500 0 0 1 3 3 2.500 2.500 0 0 1 0 5z" />
        </svg>
      </button>
      <button aria-label="Volume">
        <svg width="20" height="18" viewBox="0 0 20 18" fill="none" stroke="#fff" strokeWidth="1.200">
          <path d="M.6 6h3L7 2.500v13L3.600 12h-3zM9.500 7c1 1 1 3 0 4M12 5c2.500 2 2.500 6 0 8" />
          <path d="M15 3c4 3 4 9 0 12" stroke="#aaa" />
          <path d="M17 1c4 4 4 12 0 16" stroke="#666" />
        </svg>
      </button>
      <button aria-label="Network">
        <svg width="16" height="16" viewBox="0 0 16 16" fill="none" stroke="#8a8a8a" strokeWidth="1.200">
          <path d="M1 15C1 7 7 1 15 1M4.500 15C4.500 9 9 4.500 15 4.500" />
          <path d="M8 15c0-4 3-7 7-7M11 15c0-2 2-4 4-4" stroke="#eee" />
          <circle cx="14" cy="14" r="1.500" fill="#fff" stroke="none" />
        </svg>
      </button>
    </Tray>
    <Language>ENG</Language>
    <Clock>
      <span>11:06 PM</span>
      <span>4/14/2018</span>
    </Clock>
    <ActionCenter aria-label="Action center">
      <svg width="20" height="20" viewBox="0 0 20 20" fill="none" stroke="#fff" strokeWidth="1.200">
        <path d="M.6.600h18.800v15.800H12L10 18.600 8 16.400H.6z" />
      </svg>
    </ActionCenter>
  </TaskbarView>
);

const App = () => (
  <>
    <GlobalStyle />
    <Desktop>
      <Explorer />
      <Taskbar />
      <DiskManagement />
      <ExtendWizard />
    </Desktop>
  </>
);

export default App;

/* ---------- styles ---------- */

const GlobalStyle = createGlobalStyle`
  * {
    box-sizing: border-box;
  }

  body {
    margin: 0;
    font: 14px/20px ${ui};
    color: #111;
  }

  button,
  input {
    font: inherit;
    color: inherit;
    border: 0;
    padding: 0;
    margin: 0;
    background: none;
    border-radius: 0;
    outline: 0;
  }

  p,
  h2,
  ul {
    margin: 0;
    padding: 0;
    list-style: none;
  }

  a {
    color: inherit;
    text-decoration: none;
  }

  svg {
    display: block;
    flex-shrink: 0;
  }
`;

const Desktop = styled.div`
  position: relative;
  display: flex;
  height: 100vh;
  min-height: 900px;
  overflow: hidden;
`;

const Spacer = styled.div`
  flex: 1;
`;

const IconButton = styled.button`
  display: flex;
  align-items: center;
  justify-content: center;
  width: ${({ $w }) => $w}px;
  height: 100%;
`;

const WindowButtons = styled.div`
  display: flex;
  margin-left: auto;

  button {
    display: flex;
    align-items: center;
    justify-content: center;
    width: 58px;
  }
`;

const ExplorerView = styled.div`
  flex: 1;
  min-width: 0;
  display: flex;
  flex-direction: column;
  background: #fff;
`;

const TitleBar = styled.header`
  display: flex;
  height: 29px;
  padding-right: 3px;

  ${WindowButtons} {
    height: 28px;
  }
`;

const QuickBar = styled.div`
  display: flex;
  align-items: center;
  height: 29px;
  padding-left: 1px;
  color: #999;

  span {
    padding-left: 3px;
  }
`;

const Divider = styled.div`
  width: 1px;
  height: 16px;
  margin: 0 5px;
  background: #7d7d7d;
`;

const Tabs = styled.div`
  display: flex;
  height: 29px;
  font-size: 13px;
  border-bottom: 1px solid #dadbdc;
`;

const Tab = styled.button`
  width: 92px;
  height: 29px;
  color: #3b3b3b;

  ${({ $active }) =>
    $active &&
    css`
      background: #f5f6f7;
      border: 1px solid #dadbdc;
      border-bottom: 0;
    `}

  & + & {
    width: 63px;
    height: 28px;
  }
`;

const FileTab = styled.button`
  width: 70px;
  height: 28px;
  color: #fff;
  background: #1979ca;
`;

const TabTools = styled.div`
  display: flex;
  align-items: center;
  gap: 7px;
  margin-left: auto;
  padding-right: 4px;
`;

const HelpButton = styled.button`
  width: 18px;
  height: 18px;
  border-radius: 50%;
  line-height: 18px;
  font-weight: 600;
  color: #fff;
  background: #0f74cf;
`;

const Ribbon = styled.div`
  display: flex;
  height: 113px;
  padding: 2px 0 1px;
  font-size: 13px;
  color: #444;
  background: #f5f6f7;
  border-bottom: 1px solid #dadbdc;
`;

const RibbonGroup = styled.div`
  display: flex;
  flex-direction: column;
  justify-content: space-between;
  width: ${({ $w }) => $w + 1}px;
  border-right: 1px solid #e1e2e3;
`;

const RibbonButtons = styled.div`
  display: flex;
  align-items: flex-start;
`;

const RibbonButton = styled.button`
  display: flex;
  flex-direction: column;
  align-items: center;
  justify-content: flex-end;
  gap: ${({ $tight }) => ($tight ? 2 : 4)}px;
  width: ${({ $w }) => $w}px;
  height: 67px;
  white-space: nowrap;

  &:disabled {
    color: #9a9a9a;
  }
`;

const SmallButtons = styled.div`
  display: flex;
  flex-direction: column;
  gap: 7px;
  padding-top: 6px;

  button {
    display: flex;
    align-items: center;
    gap: 4px;
    height: 20px;
    white-space: nowrap;
  }
`;

const GroupName = styled.div`
  text-align: center;
`;

const AddressRow = styled.div`
  display: flex;
  align-items: center;
  height: 42px;
  padding: 0 12px 0 3px;
`;

const NavButtons = styled.div`
  display: flex;
  align-items: center;
  width: 131px;
`;

const AddressBox = styled.div`
  flex: 1;
  display: flex;
  align-items: center;
  height: 28px;
  padding-left: 4px;
  border: 1px solid #d9d9d9;
`;

const Crumb = styled.div`
  flex: 1;
  display: flex;
  align-items: center;
  gap: 6px;
`;

const RefreshButton = styled.button`
  display: flex;
  align-items: center;
  justify-content: center;
  width: 25px;
  height: 100%;
  border-left: 1px solid #d9d9d9;
`;

const SearchBox = styled.div`
  display: flex;
  align-items: center;
  width: 317px;
  height: 28px;
  margin-left: 12px;
  padding: 1px 11px 0 9px;
  border: 1px solid #d9d9d9;

  input {
    flex: 1;
    min-width: 0;
  }

  input::placeholder {
    color: #757575;
    opacity: 1;
  }
`;

const ExplorerBody = styled.div`
  flex: 1;
  display: flex;
  min-height: 0;
`;

const NavPane = styled.nav`
  width: 198px;
  padding-top: 22px;
  border-right: 1px solid #f3f3f3;

  ul + ul {
    margin-top: 10px;
  }
`;

const NavLink = styled.a`
  display: flex;
  align-items: center;
  height: 30px;
  padding-top: 2px;
  padding-left: ${({ $child }) => ($child ? 40 : 30)}px;
  background: ${({ $active }) => ($active ? "#d9d9d9" : "none")};

  i {
    display: flex;
    justify-content: center;
    width: 20px;
    margin-right: 5px;
  }
`;

const Content = styled.main`
  flex: 1;
  padding: 24px 9px 0 0;
`;

const Tiles = styled.div`
  display: grid;
  grid-template-columns: repeat(5, 1fr);
  align-items: start;
  min-height: 171px;
  padding: 20px 7px 20px 30px;
  border-top: 1px solid #e2e2e2;
`;

const Tile = styled.a`
  grid-column: ${({ $col }) => $col};
  grid-row: 1;
  display: flex;
  align-items: center;
  gap: 7px;
  height: 60px;

  span {
    padding-bottom: 5px;
  }
`;

const DriveSlot = styled.div`
  width: 54px;
`;

const UsageBar = styled.div`
  flex: 1;
  height: 18px;
  margin-right: 21px;
  border: 1px solid #bcbcbc;
  background: #e6e6e6;
`;

const StatusBar = styled.footer`
  display: flex;
  align-items: center;
  justify-content: space-between;
  height: 32px;
  padding: 1px 10px 0 17px;
  color: #333;
`;

const ViewButtons = styled.div`
  display: flex;
  align-items: center;
  gap: 10px;
`;

const DiskWindow = styled.section`
  position: absolute;
  left: 169px;
  top: 120px;
  width: 942px;
  background: #fff;
  border: 1px solid #8f8f8f;
  box-shadow: 0 3px 14px rgba(0, 0, 0, 0.34);
`;

const DiskTitle = styled.div`
  display: flex;
  align-items: center;
  gap: 5px;
  height: 38px;
  padding-left: 10px;
  color: #999;

  ${WindowButtons} {
    height: 32px;
    align-self: flex-start;
    padding-right: 2px;
  }
`;

const MenuBar = styled.div`
  display: flex;
  gap: 20px;
  height: 29px;
  padding: 1px 0 0 13px;
  border-bottom: 1px solid #b9bfc4;
`;

const Toolbar = styled.div`
  display: flex;
  align-items: center;
  height: 29px;
  padding-left: 2px;
  border-bottom: 1px solid #e3e3e3;
`;

const ToolDivider = styled.div`
  width: 1px;
  height: 24px;
  margin-right: 7px;
  background: #9b9b9b;
`;

const Panes = styled.div`
  padding-top: 7px;
  background: #f0f0f0;
`;

const VolumePane = styled.div`
  height: 316px;
  margin-right: 2px;
  border: 2px solid #737373;
  border-width: 2px 1px 2px 2px;
  border-right-color: #dcdcdc;
  background: linear-gradient(#fff, #fff) 0 0 / 100% 304px no-repeat #f0f0f0;
`;

const VolumeTable = styled.table`
  width: 100%;
  table-layout: fixed;
  border-collapse: collapse;

  th {
    height: 23px;
    padding: 5px 0 0 8px;
    font-weight: 400;
    line-height: 16px;
    text-align: left;
    background: #f0f0f0;
    border-right: 2px solid #7a7a7a;
    border-bottom: 2px solid #6e6e6e;
    box-shadow: inset 2px 2px 0 #fff;
  }

  th:last-child {
    border-right: 0;
  }

  tbody tr:first-child td {
    padding-top: 3px;
    height: 24px;
  }

  td {
    height: 21px;
    padding: 0 0 0 8px;
    line-height: 20px;
    white-space: nowrap;
    overflow: hidden;
  }
`;

const VolumeName = styled.td`
  && {
    padding-left: 4px;
  }

  svg {
    display: inline-block;
    margin-right: 1px;
  }

  span {
    padding-left: 2px;
    background: ${({ $selected }) => ($selected ? "#efefef" : "none")};
  }
`;

const GraphPane = styled.div`
  display: flex;
  margin-right: 3px;
  padding-top: 1px;
  border-left: 2px solid #8b8b8b;
`;

const Disks = styled.div`
  flex: 1;
  min-width: 0;
  border-bottom: 2px solid #a6a6a6;
`;

const DiskRow = styled.div`
  display: flex;
  height: 130px;

  &:first-child {
    height: 136px;
    padding-top: 4px;
    border-bottom: 2px solid #a0a0a0;
    box-shadow: inset 0 -1px 0 #fff;
  }
`;

const DiskLabel = styled.div`
  width: 138px;
  padding: 13px 0 0 12px;
  border-right: 1px solid #a0a0a0;
  box-shadow: inset -4px 0 0 #f0f0f0, inset -5px 0 0 #fff, inset 0 2px 0 #fafafa;

  svg {
    margin: 0 0 8px 2px;
  }

  ${DiskRow} + ${DiskRow} & {
    padding-top: 4px;
  }
`;

const PartitionStrip = styled.div`
  flex: 1;
  display: flex;
  justify-content: flex-end;
  padding: 4px 0 2px;
`;

const Extended = styled.div`
  display: flex;
  border: 3px solid #008000;
  border-right-width: 5px;
`;

const Partition = styled.div`
  width: ${({ $w }) => $w}px;
  border-right: 1px solid #a0a0a0;

  &::before {
    content: "";
    display: block;
    height: 20px;
    background: #0000ff;
    border: 1px solid #fff;
    border-bottom: 2px solid #a0a0a0;
  }

  & + & {
    border-right: 3px solid #a0a0a0;
  }

  > div {
    height: 92px;
    margin: 2px 3px 0 5px;
    padding: 3px 0 0 4px;
    overflow: hidden;
    white-space: nowrap;
    background: #fff;
    border-top: 1px solid #999;
    border-left: 1px solid #999;
  }
`;

const ScrollBar = styled.div`
  display: flex;
  flex-direction: column;
  width: 20px;
  margin-left: 3px;

  button {
    display: flex;
    align-items: center;
    justify-content: center;
    height: 20px;
  }
`;

const ScrollThumb = styled.div`
  height: 151px;
  background: #cdcdcd;
`;

const Legend = styled.ul`
  display: flex;
  align-items: center;
  gap: 7px;
  height: 25px;
  margin-right: 2px;
  padding: 2px 0 0 7px;
  border: 2px solid #a6a6a6;
  border-top: 0;
  border-left-color: #8b8b8b;

  li {
    display: flex;
    align-items: center;
    gap: 6px;
  }
`;

const Swatch = styled.span`
  width: 14px;
  height: 16px;
  background: ${({ $color }) => $color};
  border: 1px solid #c4c4c4;
`;

const DiskStatus = styled.div`
  display: grid;
  grid-template-columns: 664px 167px 1fr;
  height: 31px;
  padding: 4px 2px 1px 0;
  background: #f0f0f0;
  border-top: 1px solid #fff;

  span {
    border-right: 1px solid #dcdcdc;
  }
`;

const WizardView = styled.section`
  position: absolute;
  left: 202px;
  top: 246px;
  width: 623px;
  font: 13px/16px ${dialog};
  color: #000;
  background: #f0f0f0;
  border: 1px solid #6f6f6f;
  box-shadow: 0 6px 22px rgba(0, 0, 0, 0.42);
`;

const WizardHeader = styled.div`
  height: 112px;
  background: #fff;
  border-bottom: 2px solid #adadad;

  h2 {
    padding: 13px 0 0 28px;
    font-size: 14px;
    line-height: 16px;
  }

  p {
    padding: 3px 0 0 55px;
  }
`;

const WizardTitle = styled.div`
  display: flex;
  align-items: center;
  justify-content: space-between;
  height: 38px;
  padding-left: 10px;
  font: 14px/20px ${ui};

  button {
    display: flex;
    padding: 8px 15px 14px;
  }
`;

const WizardBody = styled.div`
  padding: 15px 53px 25px 54px;
  border-top: 1px solid #fff;
  border-bottom: 2px solid #adadad;
`;

const DiskPicker = styled.div`
  display: grid;
  grid-template-columns: 196px 138px 180px;
  margin-top: 4px;

  span {
    line-height: 16px;
  }
`;

const ListBox = styled.ul`
  width: 180px;
  height: 120px;
  margin-top: 6px;
  padding: 1px;
  background: #fff;
  border: 1px solid #828790;

  li {
    display: grid;
    grid-template-columns: 60px 1fr;
    height: 20px;
    padding-left: 2px;
    color: #fff;
    background: #3399ff;
  }
`;

const DialogButton = styled.button`
  height: 28px;
  background: ${({ $primary }) => ($primary ? "#e5f1fb" : "#e1e1e1")};
  border: 1px solid ${({ $primary }) => ($primary ? "#0078d7" : "#adadad")};

  &:disabled {
    color: #838383;
    background: #cccccc;
    border-color: #bfbfbf;
  }
`;

const PickerButtons = styled.div`
  display: flex;
  flex-direction: column;
  gap: 8px;
  width: 118px;
  padding-top: 29px;
`;

const Sizes = styled.div`
  display: grid;
  grid-template-columns: 1fr 180px;
  row-gap: 6px;
  align-items: center;
  margin: 19px 0 0 -3px;
`;

const ReadOnlyField = styled.input`
  width: 100%;
  height: 21px;
  border: 1px solid #fff;
  border-top: 2px solid #a0a0a0;
  border-left: 1px solid #a0a0a0;
`;

const Spinner = styled.div`
  display: flex;
  height: 29px;
  background: #fff;
  border: 1px solid #7eb4ea;
  border-right-color: #acacac;

  input {
    width: 41px;
    height: 22px;
    padding-left: 4px;
    caret-color: transparent;
  }
`;

const Caret = styled.span`
  width: 1px;
  height: 18px;
  margin-top: 3px;
  background: #000;
`;

const SpinButtons = styled.div`
  display: grid;
  width: 22px;
  margin-left: auto;

  button {
    display: flex;
    align-items: center;
    justify-content: center;
    background: #f0f0f0;
    border: 1px solid #acacac;
  }
`;

const WizardFooter = styled.div`
  display: flex;
  justify-content: flex-end;
  gap: 13px;
  height: 58px;
  padding: 16px 13px 0;
  border-top: 1px solid #fff;

  button {
    width: 93px;
  }
`;

const StepButtons = styled.div`
  display: flex;
  gap: 1px;
`;

const TaskbarView = styled.aside`
  position: relative;
  display: flex;
  flex-direction: column;
  width: 86px;
  color: #fff;
  background: #0b0a10;

  > * {
    position: relative;
  }
`;

const Wallpaper = styled.svg`
  && {
    position: absolute;
  }

  inset: 0;
  width: 100%;
  height: 100%;
`;

const SystemButton = styled.button`
  display: flex;
  align-items: center;
  justify-content: center;
  height: 50px;
`;

const Apps = styled.div`
  display: flex;
  flex-direction: column;
  padding-top: 3px;
`;

const AppButton = styled.button`
  display: flex;
  align-items: center;
  justify-content: center;
  height: 59px;
  padding-left: 3px;
  border-right: 3px solid ${({ $open }) => ($open ? "#cbbfc3" : "transparent")};
  background: ${({ $active }) => ($active ? "#4c4a4f" : "none")};
`;

const Tray = styled.div`
  display: grid;
  grid-template-columns: 30px 30px;
  grid-auto-rows: 30px;
  padding-left: 6px;

  button {
    display: flex;
    align-items: center;
    justify-content: center;
  }
`;

const Language = styled.div`
  padding-top: 12px;
  text-align: center;
`;

const Clock = styled.div`
  display: flex;
  flex-direction: column;
  align-items: center;
  gap: 2px;
  padding: 28px 0 23px;
`;

const ActionCenter = styled.button`
  display: flex;
  align-items: center;
  justify-content: center;
  height: 20px;
  margin-bottom: 26px;
`;
